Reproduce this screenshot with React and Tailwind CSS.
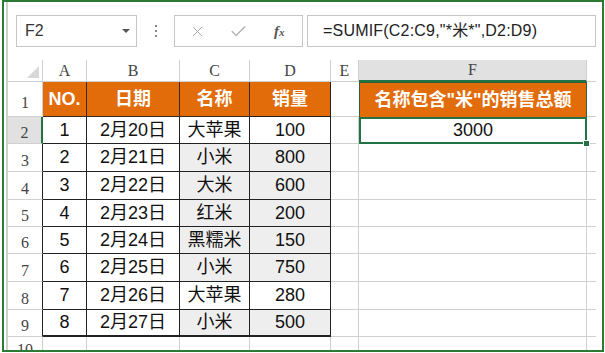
import { X, Check } from 'lucide-react'

const rows = [
  { no: 1, date: '2月20日', name: '大苹果', qty: 100, mi: false, h: 'h-[27px]' },
  { no: 2, date: '2月21日', name: '小米', qty: 800, mi: true, h: 'h-[28px]' },
  { no: 3, date: '2月22日', name: '大米', qty: 600, mi: true, h: 'h-[28px]' },
  { no: 4, date: '2月23日', name: '红米', qty: 200, mi: true, h: 'h-[27px]' },
  { no: 5, date: '2月24日', name: '黑糯米', qty: 150, mi: true, h: 'h-[27px]' },
  { no: 6, date: '2月25日', name: '小米', qty: 750, mi: true, h: 'h-[28px]' },
  { no: 7, date: '2月26日', name: '大苹果', qty: 280, mi: false, h: 'h-[28px]' },
  { no: 8, date: '2月27日', name: '小米', qty: 500, mi: true, h: 'h-[27px]' },
]

const sans = "font-['Liberation_Sans','Noto_Sans_CJK_SC',sans-serif]"
const serif = "font-['Liberation_Serif','Noto_Sans_CJK_SC',serif]"

const App = () => {
  return (
    <div className="w-[605px] h-[353px] bg-white overflow-hidden">
      <div className="ml-[2px] w-[602px] h-[352px] border-2 border-[#2d7a34] bg-white">
        <div className="ml-[2px] h-full border-l-2 border-[#c9d3c9] overflow-hidden">
          {/* Formula bar */}
          <div className="flex items-center h-[32px] mt-[13px] text-[#333]">
            <div className={`ml-[8px] w-[121px] h-[32px] border border-[#c6c6c6] flex items-center justify-between pl-[8px] pr-[6px] text-[16px] ${sans}`}>
              <span>F2</span>
              <span className="w-0 h-0 border-l-[4px] border-r-[4px] border-t-[4px] border-l-transparent border-r-transparent border-t-[#555]" />
            </div>
            <div className="w-[37px] flex flex-col items-center gap-[3px]">
              <span className="w-[2px] h-[2px] bg-[#888]" />
              <span className="w-[2px] h-[2px] bg-[#888]" />
              <span className="w-[2px] h-[2px] bg-[#888]" />
            </div>
            <div className="w-[129px] h-[32px] border border-[#c6c6c6] flex items-center">
              <X size={17} strokeWidth={1.4} className="ml-[14px] text-[#a8a8a8]" />
              <Check size={19} strokeWidth={1.6} className="ml-[23px] text-[#b0b0b0]" />
              <span className="ml-[26px] text-[15px] italic font-bold text-[#555] font-['Liberation_Serif',serif]">f<span className="text-[11px]">x</span></span>
            </div>
            <div className={`ml-[4px] w-[289px] h-[32px] border border-[#c6c6c6] flex items-center pl-[15px] text-[16px] tracking-[0.2px] text-[#222] ${sans}`}>
              =SUMIF(C2:C9,"*米*",D2:D9)
            </div>
          </div>

          {/* Sheet */}
          <div className="mt-[13px]">
            {/* column headers */}
            <div className={`flex h-[22px] text-[16px] text-[#444] ${serif}`}>
              <div className="w-[35px] border-r border-b border-[#d0d0d0] flex items-end justify-end pr-[3px] pb-[3px]">
                <span className="w-0 h-0 border-l-[12px] border-t-[12px] border-l-transparent border-t-transparent border-b-0 border-r-0 relative">
                  <span className="absolute -left-[12px] -top-[12px] w-0 h-0 border-l-[12px] border-b-[12px] border-l-transparent border-b-[#d8d8d8]" />
                </span>
              </div>
              <div className="w-[44px] border-r border-b border-[#d0d0d0] flex items-center justify-center">A</div>
              <div className="w-[93px] border-r border-b border-[#d0d0d0] flex items-center justify-center">B</div>
              <div className="w-[70px] border-r border-b border-[#d0d0d0] flex items-center justify-center">C</div>
              <div className="w-[81px] border-r border-b border-[#d0d0d0] flex items-center justify-center">D</div>
              <div className="w-[28px] border-r border-b border-[#d0d0d0] flex items-center justify-center">E</div>
              <div className="w-[228px] bg-[#e1e1e1] border-r border-[#d0d0d0] border-b-2 border-b-[#217346] flex items-center justify-center">F</div>
              <div className="w-[9px] border-b border-[#d0d0d0]" />
            </div>

            {/* row 1 */}
            <div className={`flex h-[35px] text-[18px] ${sans}`}>
              <div className={`w-[35px] border-r border-b border-[#d0d0d0] flex items-end justify-center pb-[1px] text-[16px] text-[#444] ${serif}`}>1</div>
              <div className="w-[44px] bg-[#e26b0a] border-r border-b border-[#3a2a1a] flex items-center justify-center text-white font-bold">NO.</div>
              <div className="w-[93px] bg-[#e26b0a] border-r border-b border-[#3a2a1a] flex items-center justify-center text-white font-bold">日期</div>
              <div className="w-[70px] bg-[#e26b0a] border-r border-b border-[#3a2a1a] flex items-center justify-center text-white font-bold">名称</div>
              <div className="w-[81px] bg-[#e26b0a] border-r border-b border-[#222] flex items-center justify-center text-white font-bold">销量</div>
              <div className="w-[28px] border-b border-[#d0d0d0]" />
              <div className="w-[228px] bg-[#e26b0a] border border-b-0 border-[#2f5f3c] flex items-center justify-center text-white font-bold">名称包含"米"的销售总额</div>
              <div className="w-[9px] border-b border-[#d0d0d0]" />
            </div>

            {/* data rows */}
            {rows.map((r, i) => {
              const first = i === 0
              const last = i === rows.length - 1
              const bb = last ? 'border-b-2 border-b-[#222]' : 'border-b border-b-[#222]'
              const gray = r.mi ? 'bg-[#eeeeee]' : 'bg-white'
              return (
                <div key={r.no} className={`flex ${r.h} text-[18px] text-[#111] ${sans}`}>
                  <div className={`w-[35px] flex items-end justify-center text-[16px] leading-[20px] text-[#444] ${serif} ${first ? 'bg-[#e1e1e1] border-r-2 border-r-[#217346] border-b border-b-[#d0d0d0]' : 'border-r border-r-[#222] border-b border-b-[#d0d0d0]'}`}>{r.no + 1}</div>
                  <div className={`w-[44px] border-r border-r-[#222] ${bb} flex items-center justify-center`}>{r.no}</div>
                  <div className={`w-[93px] border-r border-r-[#222] ${bb} flex items-center justify-center`}>{r.date}</div>
                  <div className={`w-[70px] border-r border-r-[#222] ${bb} ${gray} flex items-center justify-center`}>{r.name}</div>
                  <div className={`w-[81px] border-r border-r-[#222] ${bb} ${gray} flex items-center justify-center`}>{r.qty}</div>
                  <div className="w-[28px] border-r border-b border-[#d0d0d0]" />
                  {first ? (
                    <div className="w-[228px] relative border-2 border-[#217346] flex items-center justify-center">
                      3000
                      <span className="absolute -right-[5px] -bottom-[5px] w-[7px] h-[7px] bg-[#217346] border border-white" />
                    </div>
                  ) : (
                    <div className="w-[228px] border-r border-b border-[#d0d0d0]" />
                  )}
                  <div className="w-[9px] border-b border-[#d0d0d0]" />
                </div>
              )
            })}

            {/* row 10 */}
            <div className={`flex h-[28px] ${sans}`}>
              <div className={`w-[35px] border-r border-[#d0d0d0] flex items-start justify-center pt-[1px] text-[16px] text-[#444] ${serif}`}>10</div>
              <div className="w-[44px] border-r border-[#d0d0d0]" />
              <div className="w-[93px] border-r border-[#d0d0d0]" />
              <div className="w-[70px] border-r border-[#d0d0d0]" />
              <div className="w-[81px] border-r border-[#d0d0d0]" />
              <div className="w-[28px] border-r border-[#d0d0d0]" />
              <div className="w-[228px] border-r border-[#d0d0d0]" />
            </div>
          </div>
        </div>
      </div>
    </div>
  )
}

export default App
